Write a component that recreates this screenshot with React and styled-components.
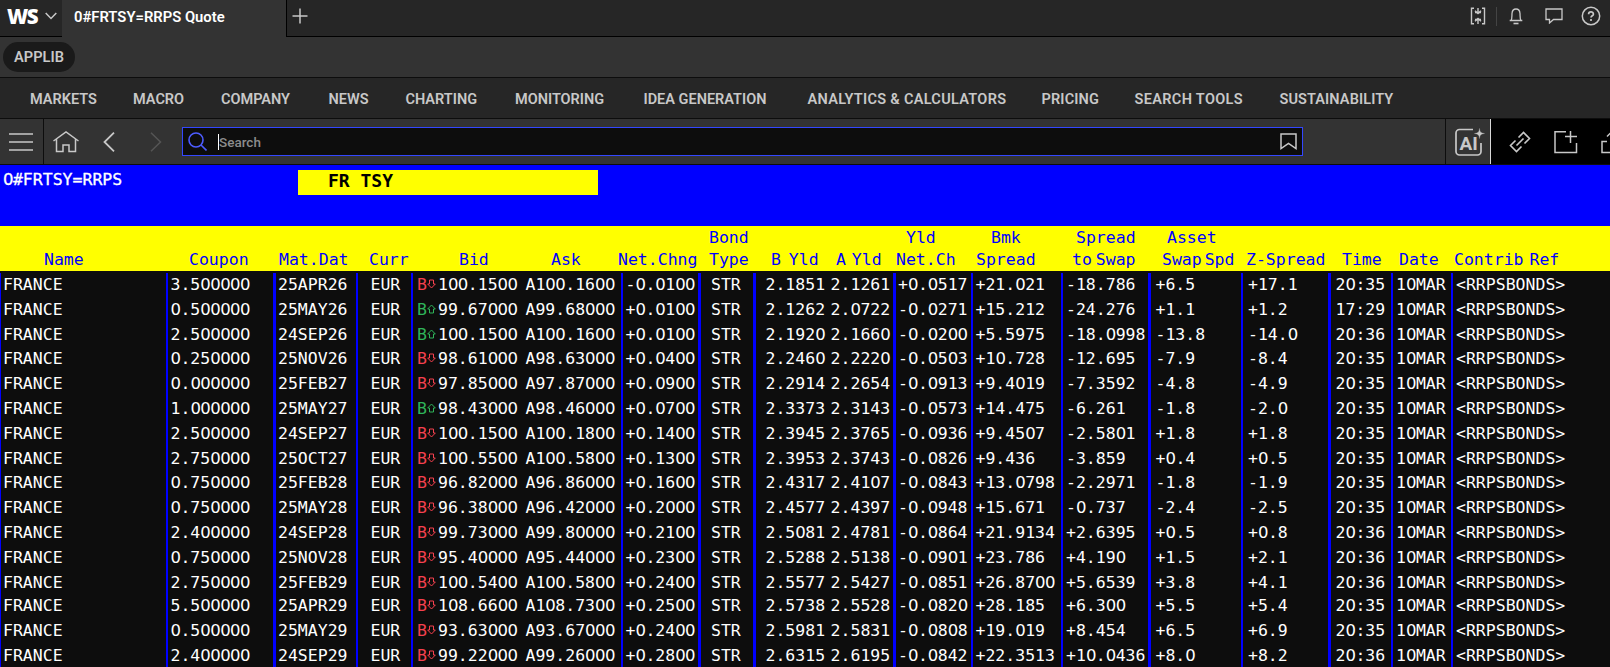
import styled, { createGlobalStyle } from "styled-components"

const Global = createGlobalStyle`
    * { box-sizing: border-box; }
    html, body {
        margin: 0;
        background: #0d0d0d;
        overflow: hidden;
    }
`
const Page = styled.div`
    width: 1610px;
    height: 667px;
    overflow: hidden;
    display: flex;
    flex-direction: column;
    font-family: Roboto, "Liberation Sans", sans-serif;
    background: #0d0d0d;
`

// top bars
const TabBar = styled.div`
    display: flex;
    flex: none;
    height: 37px;
    background: #262626;
`
const Logo = styled.div`
    display: flex;
    align-items: center;
    gap: 8px;
    width: 62px;
    padding: 0 0 4px 7px;
    border-bottom: 1px solid #000;
    color: #fff;
    font-family: "Open Sans", "Noto Sans", sans-serif;
    font-size: 20.5px;
    font-weight: 800;
    letter-spacing: -1.6px;
`
const Tab = styled.div`
    width: 224px;
    padding: 0 0 4px 12px;
    line-height: 34px;
    background: #333;
    color: #fff;
    font-size: 14.8px;
    font-weight: 600;
    white-space: nowrap;
`
const TabRest = styled.div`
    flex: 1;
    display: flex;
    align-items: center;
    justify-content: space-between;
    padding: 0 9px 4px 5px;
    border-left: 1px solid #000;
    border-bottom: 1px solid #000;
    color: #c8c8c8;
`
const TabIcons = styled.div`
    display: flex;
    align-items: center;
`
const IconRule = styled.div`
    width: 1px;
    height: 19px;
    margin: 0 12px 0 10px;
    background: #444;
`
const Icon = styled.svg`
    display: block;
    flex: none;
    fill: none;
    stroke: ${props => props.$color || "#c8c8c8"};
    stroke-width: ${props => props.$stroke || 1.5};
    margin-left: ${props => props.$left || 0}px;
`
const LibBar = styled.div`
    flex: none;
    display: flex;
    align-items: center;
    height: 41px;
    padding-left: 3px;
    background: #333;
    border-bottom: 1px solid #0d0d0d;
`
const Pill = styled.div`
    width: 72px;
    height: 30px;
    line-height: 31px;
    border-radius: 15px;
    background: #1a1a1a;
    color: #c8c8c8;
    font-size: 14.6px;
    font-weight: 600;
    text-align: center;
`
const Nav = styled.div`
    flex: none;
    display: flex;
    gap: 35px;
    height: 41px;
    padding-left: 30px;
    line-height: 43px;
    background: #262626;
    border-bottom: 1px solid #0d0d0d;
`
const NavItem = styled.div`
    width: ${props => props.$width}px;
    color: #c8c8c8;
    font-size: 14.5px;
    font-weight: 600;
    letter-spacing: ${props => props.$tracking || 0}px;
    white-space: nowrap;
`

// search toolbar
const Toolbar = styled.div`
    flex: none;
    display: flex;
    align-items: center;
    height: 46px;
    background: #333;
    border-bottom: 1px solid #0d0d0d;
`
const MenuButton = styled.div`
    display: flex;
    align-items: center;
    width: 44px;
    height: 45px;
    padding-left: 8px;
    border-right: 1px solid #0d0d0d;
`
const Search = styled.div`
    display: flex;
    align-items: center;
    width: 1121px;
    height: 29px;
    margin-left: 20px;
    padding: 0 5px 0 5px;
    border: 1px solid #3347ff;
    background: #0d0d0d;
    color: #8c8c8c;
    font-size: 13.5px;
    font-weight: 500;
`
const Caret = styled.div`
    width: 1px;
    height: 16px;
    margin-left: 11px;
    background: #fff;
`
const AiButton = styled.div`
    display: flex;
    align-items: center;
    width: 46px;
    height: 45px;
    margin-left: auto;
    padding-left: 8px;
    border-left: 1px solid #0d0d0d;
    border-right: 1px solid #d8d8d8;
`
const Actions = styled.div`
    display: flex;
    align-items: center;
    width: 119px;
    height: 45px;
    overflow: hidden;
    background: #000;
`

// quote page
const Quote = styled.div`
    font-family: "DejaVu Sans Mono", "Liberation Mono", monospace;
    font-size: 16.5px;
`
const TitleBand = styled.div`
    display: flex;
    height: 61px;
    padding-top: 5px;
    background: #00f;
    color: #fff;
    line-height: 19px;
`
const Ric = styled.div`
    width: 298px;
    padding-left: 3px;
    -webkit-text-stroke: .3px #fff;
`
const Title = styled.div`
    width: 300px;
    height: 25px;
    padding-left: 30px;
    line-height: 22px;
    background: #ff0;
    color: #000;
    font-size: 18px;
    font-weight: 700;
    white-space: pre;
`
const HeaderRow = styled.div`
    display: flex;
    height: 45px;
    padding-left: 44px;
    background: #ff0;
    color: #00f;
`
const HeaderCell = styled.div`
    display: flex;
    flex: none;
    flex-direction: column;
    justify-content: flex-end;
    width: ${props => props.$width}px;
    height: 45px;
    line-height: 22px;
    white-space: nowrap;
    word-spacing: ${props => props.$space || 0}px;
`
const HeaderTop = styled.div`
    padding-left: ${props => props.$indent}px;
`
const Rows = styled.div`
    padding-top: 2px;
    color: #fff;
`
const Row = styled.div`
    display: grid;
    grid-template-columns: 166px 107px 83px 55px 210px 77px 55px 140px 78px 90px 87px 93px 87px 63px 60px 159px;
    height: ${props => props.$height}px;
    line-height: 23px;
`
const Cell = styled.div`
    display: flex;
    padding-left: ${props => props.$pad}px;
    border-left: ${props => props.$rule}px solid #00f;
    white-space: nowrap;
`
const Tick = styled.div`
    display: flex;
    width: 21px;
    color: ${props => props.$up ? "#2fb45a" : "#f5414f"};
`
const ArrowIcon = styled.svg`
    display: block;
    margin-top: 6px;
    fill: none;
    stroke: currentColor;
    stroke-width: 1;
`
const Second = styled.div`
    margin-left: ${props => props.$gap}px;
`
const PlainZero = styled.span`
    font-family: "DejaVu Sans", sans-serif;
    letter-spacing: -.57px;
`

const navItems = [
    ["MARKETS", 68], ["MACRO", 53], ["COMPANY", 72.5], ["NEWS", 42], ["CHARTING", 74.5],
    ["MONITORING", 93.5], ["IDEA GENERATION", 129], ["ANALYTICS & CALCULATORS", 199, .3],
    ["PRICING", 58, .15], ["SEARCH TOOLS", 110, .35], ["SUSTAINABILITY", 116, .1],
]

const headers = [
    { label: "Name", width: 145 },
    { label: "Coupon", width: 90 },
    { label: "Mat.Dat", width: 90 },
    { label: "Curr", width: 90 },
    { label: "Bid", width: 92 },
    { label: "Ask", width: 67 },
    { label: "Net.Chng", width: 91 },
    { label: "Type", top: "Bond", width: 62 },
    { label: "B Yld", width: 65, space: -2 },
    { label: "A Yld", width: 60, space: -4 },
    { label: "Net.Ch", top: "Yld", indent: 10, width: 80 },
    { label: "Spread", top: "Bmk", indent: 15, width: 96 },
    { label: "to Swap", top: "Spread", indent: 4, width: 90, space: -6 },
    { label: "Swap Spd", top: "Asset", indent: 5, width: 84, space: -7 },
    { label: "Z-Spread", width: 96 },
    { label: "Time", width: 57 },
    { label: "Date", width: 55 },
    { label: "Contrib Ref", width: 120, space: -4 },
]

// coupon, maturity, tick, bid, ask, change, bid yield, ask yield, yield change, benchmark, swap, asset swap, z-spread, time
const bonds = [
    "3.500000 25APR26 D 100.1500 A100.1600 -0.0100 2.1851 2.1261 +0.0517 +21.021 -18.786 +6.5 +17.1 20:35",
    "0.500000 25MAY26 U 99.67000 A99.68000 +0.0100 2.1262 2.0722 -0.0271 +15.212 -24.276 +1.1 +1.2 17:29",
    "2.500000 24SEP26 U 100.1500 A100.1600 +0.0100 2.1920 2.1660 -0.0200 +5.5975 -18.0998 -13.8 -14.0 20:36",
    "0.250000 25NOV26 D 98.61000 A98.63000 +0.0400 2.2460 2.2220 -0.0503 +10.728 -12.695 -7.9 -8.4 20:35",
    "0.000000 25FEB27 D 97.85000 A97.87000 +0.0900 2.2914 2.2654 -0.0913 +9.4019 -7.3592 -4.8 -4.9 20:35",
    "1.000000 25MAY27 U 98.43000 A98.46000 +0.0700 2.3373 2.3143 -0.0573 +14.475 -6.261 -1.8 -2.0 20:35",
    "2.500000 24SEP27 D 100.1500 A100.1800 +0.1400 2.3945 2.3765 -0.0936 +9.4507 -2.5801 +1.8 +1.8 20:35",
    "2.750000 25OCT27 D 100.5500 A100.5800 +0.1300 2.3953 2.3743 -0.0826 +9.436 -3.859 +0.4 +0.5 20:35",
    "0.750000 25FEB28 D 96.82000 A96.86000 +0.1600 2.4317 2.4107 -0.0843 +13.0798 -2.2971 -1.8 -1.9 20:35",
    "0.750000 25MAY28 D 96.38000 A96.42000 +0.2000 2.4577 2.4397 -0.0948 +15.671 -0.737 -2.4 -2.5 20:35",
    "2.400000 24SEP28 D 99.73000 A99.80000 +0.2100 2.5081 2.4781 -0.0864 +21.9134 +2.6395 +0.5 +0.8 20:36",
    "0.750000 25NOV28 D 95.40000 A95.44000 +0.2300 2.5288 2.5138 -0.0901 +23.786 +4.190 +1.5 +2.1 20:36",
    "2.750000 25FEB29 D 100.5400 A100.5800 +0.2400 2.5577 2.5427 -0.0851 +26.8700 +5.6539 +3.8 +4.1 20:36",
    "5.500000 25APR29 D 108.6600 A108.7300 +0.2500 2.5738 2.5528 -0.0820 +28.185 +6.300 +5.5 +5.4 20:35",
    "0.500000 25MAY29 D 93.63000 A93.67000 +0.2400 2.5981 2.5831 -0.0808 +19.019 +8.454 +6.5 +6.9 20:35",
    "2.400000 24SEP29 D 99.22000 A99.26000 +0.2800 2.6315 2.6195 -0.0842 +22.3513 +10.0436 +8.0 +8.2 20:36",
].map(line => line.split(" "))

const rowHeights = { 2: 24, 7: 24, 12: 23 }

// the mono face has a dotted zero, the page uses an open one
function Mono({ children }) {
    return (
        <span>
            {children.split(/(0+)/).map((part, i) => (
                part[0] === "0" ? <PlainZero key={i}>{part}</PlainZero> : part
            ))}
        </span>
    )
}

function Arrow({ up }) {
    return (
        <ArrowIcon width="9" height="10" viewBox="0 0 9 10">
            <path
                d="M2.500 1h4v4h1.800L4.500 9 .7 5h1.800z"
                transform={up ? "rotate(180 4.5 5)" : undefined}
            />
        </ArrowIcon>
    )
}

function BondRow({ bond, height }) {
    const [coupon, maturity, tick, bid, ask, change, bidYield, askYield, yieldChange, bmk, swap, asset, zSpread, time] = bond
    const up = tick === "U"
    return (
        <Row $height={height}>
            <Cell $rule={1} $pad={2}><Mono>FRANCE</Mono></Cell>
            <Cell $rule={2} $pad={2.5}><Mono>{coupon}</Mono></Cell>
            <Cell $rule={3} $pad={2}><Mono>{maturity}</Mono></Cell>
            <Cell $rule={2} $pad={12.5}><Mono>EUR</Mono></Cell>
            <Cell $rule={2} $pad={4}>
                <Tick $up={up}>B<Arrow up={up} /></Tick>
                <Mono>{bid}</Mono>
                <Second $gap={8}><Mono>{ask}</Mono></Second>
            </Cell>
            <Cell $rule={2} $pad={2.5}><Mono>{change}</Mono></Cell>
            <Cell $rule={3} $pad={10}><Mono>STR</Mono></Cell>
            <Cell $rule={3} $pad={9.5}>
                <Mono>{bidYield}</Mono>
                <Second $gap={5.5}><Mono>{askYield}</Mono></Second>
            </Cell>
            <Cell $rule={3} $pad={2}><Mono>{yieldChange}</Mono></Cell>
            <Cell $rule={2} $pad={2.5}><Mono>{bmk}</Mono></Cell>
            <Cell $rule={2} $pad={3}><Mono>{swap}</Mono></Cell>
            <Cell $rule={3} $pad={4.5}><Mono>{asset}</Mono></Cell>
            <Cell $rule={2} $pad={5}><Mono>{zSpread}</Mono></Cell>
            <Cell $rule={3} $pad={4.5}><Mono>{time}</Mono></Cell>
            <Cell $rule={2} $pad={3}><Mono>10MAR</Mono></Cell>
            <Cell $rule={2} $pad={3}><Mono>{"<RRPSBONDS>"}</Mono></Cell>
        </Row>
    )
}

export default function App() {
    return (
        <Page>
            <Global />
            <TabBar>
                <Logo>
                    WS
                    <Icon width="12" height="8" viewBox="0 0 12 8"><path d="M.7 1 6 6.5 11.3 1" /></Icon>
                </Logo>
                <Tab>0#FRTSY=RRPS Quote</Tab>
                <TabRest>
                    <Icon width="16" height="16" viewBox="0 0 16 16"><path d="M8 .5v15M.5 8h15" /></Icon>
                    <TabIcons>
                        <Icon width="16" height="18" viewBox="0 0 16 18" $stroke={1.4}>
                            <path d="M4 1.2H1.5v15.6H4M12 1.2h2.5v15.6H12M8 1v5M8 17v-5M5 3.7 8 6.5l3-2.800M5 14.3l3-2.8 3 2.8" />
                            <path d="M5 5.500h6M5 12.500h6" />
                        </Icon>
                        <IconRule />
                        <Icon width="14" height="17" viewBox="0 0 14 17" $stroke={1.3}>
                            <path d="M.7 12.500h12.600M2 12.500c1.200-1.500.8-4 1-7C3.200 2.500 4.800 1 7 1s3.800 1.500 4 4.500c.2 3-.2 5.500 1 7" />
                            <path d="M4.500 15.500h5" strokeWidth="1.600" />
                        </Icon>
                        <Icon width="18" height="16" viewBox="0 0 18 16" $stroke={1.3} $left={22}>
                            <path d="M1 1h16v10.500H8.500L4.500 15v-3.500H1z" />
                        </Icon>
                        <Icon width="20" height="20" viewBox="0 0 20 20" $left={18}>
                            <circle cx="10" cy="10" r="8.700" />
                            <path d="M7.600 8.200c0-3 4.800-3 4.800 0 0 1.600-2.400 1.600-2.400 3.400M10 13v2" strokeWidth="1.700" />
                        </Icon>
                    </TabIcons>
                </TabRest>
            </TabBar>
            <LibBar>
                <Pill>APPLIB</Pill>
            </LibBar>
            <Nav>
                {navItems.map(([label, width, tracking]) => (
                    <NavItem key={label} $width={width} $tracking={tracking}>{label}</NavItem>
                ))}
            </Nav>
            <Toolbar>
                <MenuButton>
                    <Icon width="26" height="20" viewBox="0 0 26 20"><path d="M1 2h24M1 10h24M1 18h24" /></Icon>
                </MenuButton>
                <Icon width="28" height="24" viewBox="0 0 28 24" $left={8}>
                    <path d="M1.500 11 14 2l12.500 9M4.500 9v12.500h6.500V15h6v6.500h6.500V9" />
                </Icon>
                <Icon width="12" height="20" viewBox="0 0 12 20" $left={23} $stroke={1.8}><path d="M11 .7 1.500 10l9.500 9.300" /></Icon>
                <Icon width="12" height="20" viewBox="0 0 12 20" $left={35} $color="#555"><path d="M1 .7l9.500 9.300L1 19.300" /></Icon>
                <Search>
                    <Icon width="19" height="19" viewBox="0 0 19 19" $color="#4d5cff" $stroke={1.6}>
                        <circle cx="8" cy="8" r="7" />
                        <path d="M13 13l5.500 5.500" />
                    </Icon>
                    <Caret />
                    Search
                    <Icon width="17" height="17" viewBox="0 0 17 17" style={{ marginLeft: "auto" }}>
                        <path d="M1 1h15v14.500l-7.500-5-7.500 5z" />
                    </Icon>
                </Search>
                <AiButton>
                    <Icon width="31" height="30" viewBox="0 0 31 30" $stroke={1.7}>
                        <path d="M19 2.500H5.500A3.500 3.500 0 0 0 2 6v18.500A3.500 3.500 0 0 0 5.500 28h18a3.500 3.500 0 0 0 3.500-3.500V16" />
                        <path d="M25.500 1.500c.5 3.500 1 4.500 5 5-4 .5-4.500 1.500-5 5-.5-3.500-1-4.500-5-5 4-.5 4.500-1.500 5-5z" fill="#c8c8c8" strokeWidth=".3" />
                        <text x="5.5" y="23" fontSize="19" fontWeight="700" fill="#c8c8c8" stroke="none">AI</text>
                    </Icon>
                </AiButton>
                <Actions>
                    <Icon width="22" height="22" viewBox="0 0 22 22" $left={18} $stroke={1.6}>
                        <path d="M9.500 6.500 14.500 1.500l6 6-5 5M12.500 15.500l-5 5-6-6 5-5M7.500 14.500l7-7" />
                    </Icon>
                    <Icon width="25" height="24" viewBox="0 0 25 24" $left={22}>
                        <path d="M13 1.700H2v20.800h21.500V13M17.500 1v12M12 6.500h12" />
                    </Icon>
                    <Icon width="25" height="24" viewBox="0 0 25 24" $left={22}>
                        <path d="M7 11.500H2v11h21v-11h-5M12 17V1.500M7 6.500l5-5 5 5" />
                    </Icon>
                </Actions>
            </Toolbar>
            <Quote>
                <TitleBand>
                    <Ric><Mono>0#FRTSY=RRPS</Mono></Ric>
                    <Title>FR TSY</Title>
                </TitleBand>
                <HeaderRow>
                    {headers.map(header => (
                        <HeaderCell key={header.label} $width={header.width} $space={header.space}>
                            {header.top && <HeaderTop $indent={header.indent || 0}>{header.top}</HeaderTop>}
                            {header.label}
                        </HeaderCell>
                    ))}
                </HeaderRow>
                <Rows>
                    {bonds.map((bond, i) => (
                        <BondRow key={bond[1]} bond={bond} height={rowHeights[i] || 25} />
                    ))}
                </Rows>
            </Quote>
        </Page>
    )
}
